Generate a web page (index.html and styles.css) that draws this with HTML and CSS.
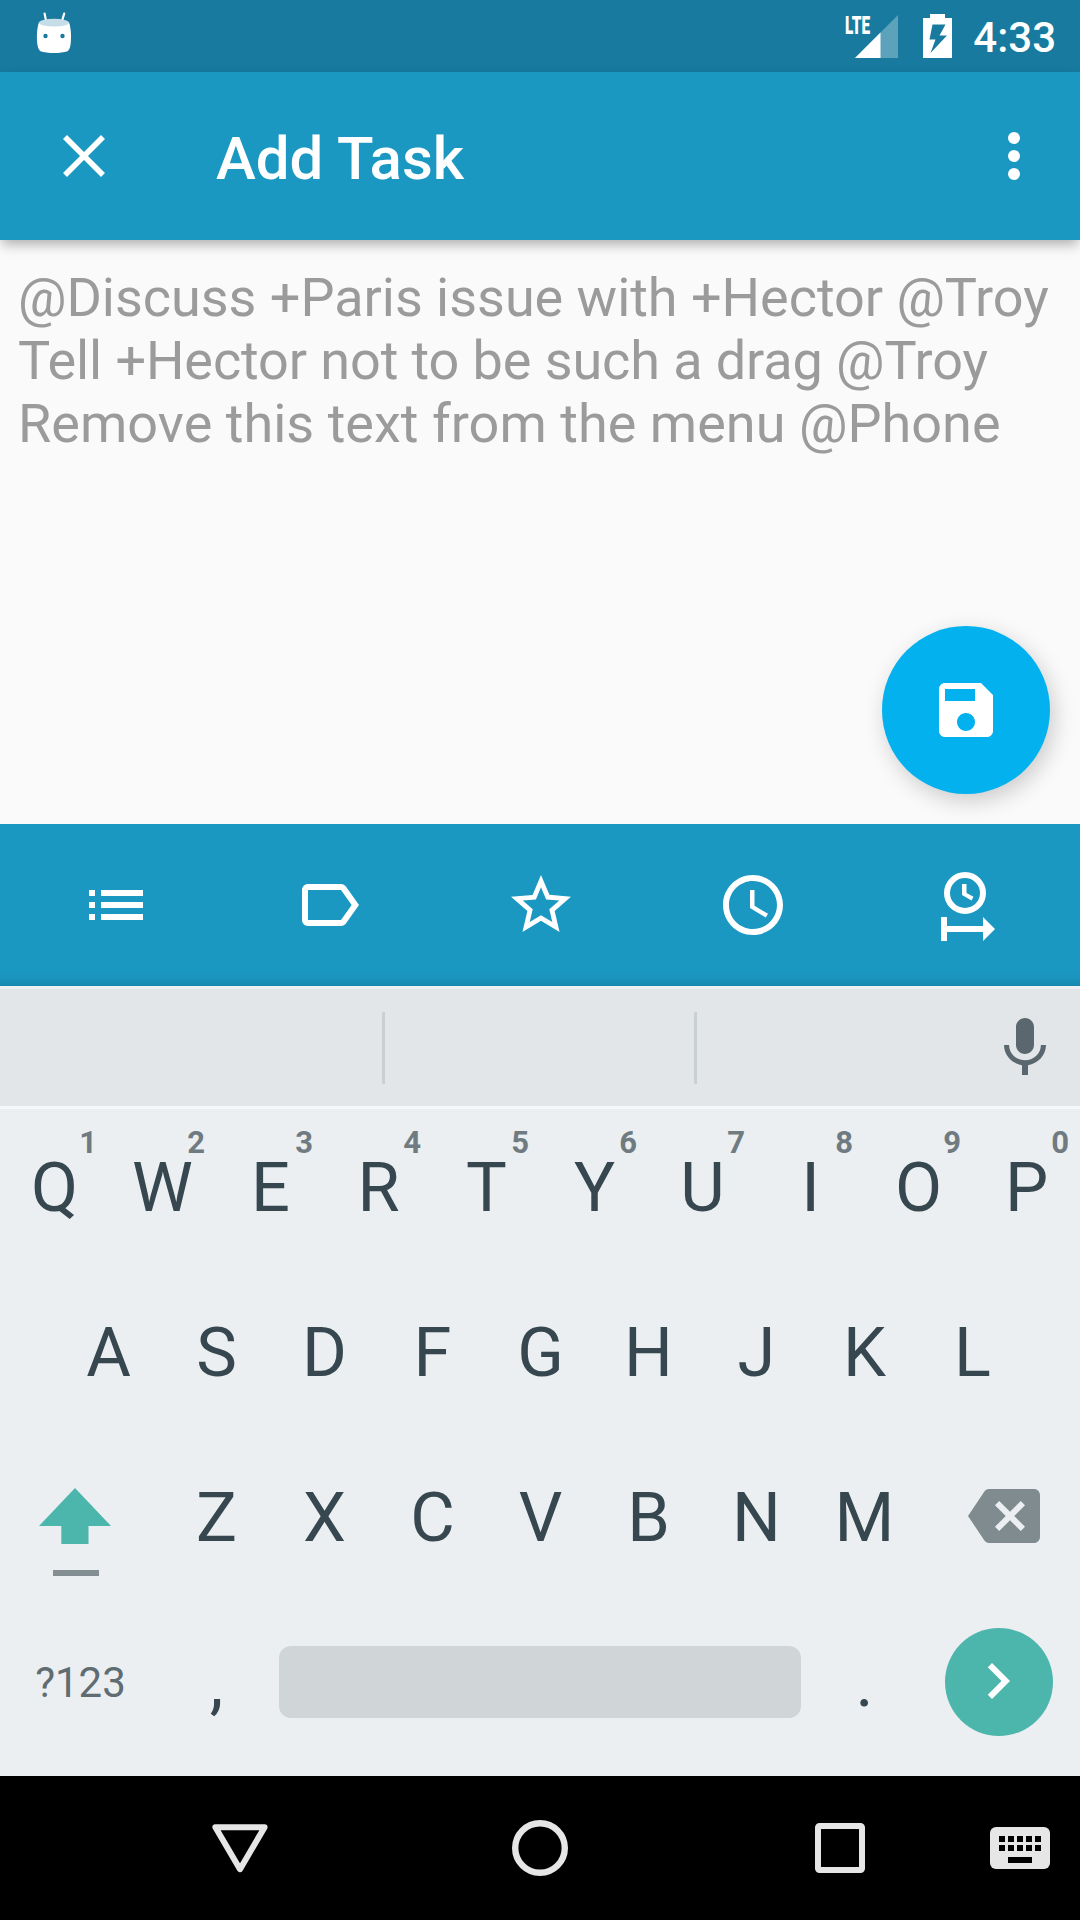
FILE: index.html
```html
<!DOCTYPE html>
<html lang="en">
<head>
<meta charset="utf-8">
<title>Add Task</title>
<link rel="stylesheet" href="styles.css">
</head>
<body>
<div class="screen">
  <header class="status-bar">
    <svg class="status-app" width="36" height="44" viewBox="36 11 36 44">
      <path d="M44.6 13.6L46.3 22M64.2 13.6L61.7 22" stroke="#fff" stroke-width="2.2" stroke-linecap="round"/>
      <path d="M39 22C37.3 27 36.9 32 36.9 37C36.900 43 37.600 49.500 40.500 51.200C47 53.600 61 53.600 67.500 51.200C70.400 49.500 71 43 71 37C71 32 70.600 27 69 22Z" fill="#fff"/>
      <ellipse cx="54" cy="22.700" rx="15" ry="3.900" fill="#c5dde6"/>
      <circle cx="45.500" cy="36" r="2.200" fill="#177a9e"/><circle cx="62.500" cy="36" r="2.200" fill="#177a9e"/>
    </svg>
    <div class="status-icons">
      <span class="lte">LTE</span>
      <svg class="signal" width="43" height="43" viewBox="0 0 43 43"><path d="M43 0V43H0Z" fill="#fff" fill-opacity=".3"/><path d="M25.500 17.500V43H0Z" fill="#fff"/></svg>
      <svg class="battery" width="29" height="44" viewBox="0 0 29 44"><path fill="#fff" fill-rule="evenodd" d="M7 0H22V4H29V44H0V4H7ZM9.500 10.500L6.500 25.500H12.500L7.500 39L24 21.500H16.500L22.500 10.500Z"/></svg>
      <span class="time">4:33</span>
    </div>
  </header>

  <div class="app-bar">
    <svg class="close" width="42" height="42" viewBox="0 0 42 42"><path d="M2 2L40 40M40 2L2 40" stroke="#fff" stroke-width="5.600"/></svg>
    <h1 class="title">Add Task</h1>
    <svg class="overflow" width="12" height="48" viewBox="0 0 12 48" fill="#fff"><circle cx="6" cy="6" r="6"/><circle cx="6" cy="24" r="6"/><circle cx="6" cy="42" r="6"/></svg>
  </div>

  <main class="editor">
    <p class="hint"><span class="line-first">@Discuss +Paris issue with +Hector @Troy</span><br><span class="line-second">Tell +Hector not to be such a drag @Troy</span><br><span class="line-third">Remove this text from the menu @Phone</span></p>
    <button class="fab" aria-label="Save">
      <svg width="72" height="72" viewBox="0 0 24 24" fill="#fff"><path d="M17 3H5c-1.110 0-2 .9-2 2v14c0 1.100.890 2 2 2h14c1.100 0 2-.9 2-2V7l-4-4zm-5 16c-1.660 0-3-1.340-3-3s1.340-3 3-3 3 1.340 3 3-1.340 3-3 3zm3-10H5V5h10v4z"/></svg>
    </button>
  </main>

  <nav class="tools">
    <svg width="72" height="72" viewBox="0 0 24 24"><path d="M3 13h2v-2H3v2zm0 4h2v-2H3v2zm0-8h2V7H3v2zm4 4h14v-2H7v2zm0 4h14v-2H7v2zM7 7v2h14V7H7z"/></svg>
    <svg width="72" height="72" viewBox="0 0 24 24"><path d="M17.630 5.840C17.270 5.330 16.670 5 16 5L5 5.010C3.900 5.010 3 5.900 3 7v10c0 1.100.9 1.990 2 1.990L16 19c.670 0 1.270-.330 1.630-.840L22 12l-4.370-6.160zM16 17H5V7h11l3.550 5L16 17z"/></svg>
    <svg width="72" height="72" viewBox="0 0 24 24"><path d="M22 9.240l-7.190-.620L12 2 9.190 8.630 2 9.240l5.460 4.730L5.820 21 12 17.270 18.180 21l-1.630-7.030L22 9.240zM12 15.400l-3.760 2.270 1-4.280-3.320-2.880 4.380-.380L12 6.100l1.710 4.040 4.380.380-3.320 2.880 1 4.280L12 15.400z"/></svg>
    <svg width="72" height="72" viewBox="0 0 24 24"><path d="M11.990 2C6.470 2 2 6.480 2 12s4.470 10 9.990 10C17.520 22 22 17.520 22 12S17.520 2 11.990 2zM12 20c-4.420 0-8-3.580-8-8s3.580-8 8-8 8 3.580 8 8-3.580 8-8 8zm.5-13H11v6l5.250 3.150.750-1.230-4.500-2.670z"/></svg>
    <svg width="72" height="72" viewBox="930 869 72 72"><circle cx="965" cy="893" r="18" fill="none" stroke="#fff" stroke-width="6"/><path d="M962 884h4.500v9l7 3.800-2 3.700-9.500-5.500ZM941 917h6v9h36v-9l12 12-12 12v-9h-36v9h-6Z"/></svg>
  </nav>

  <section class="keyboard">
    <div class="suggestions">
      <span class="slot"></span><span class="slot slot-mid"></span>
      <svg class="mic" width="72" height="72" viewBox="0 0 24 24" fill="#5b676e"><path d="M12 14c1.660 0 2.990-1.340 2.990-3L15 5c0-1.660-1.340-3-3-3S9 3.340 9 5v6c0 1.660 1.340 3 3 3zm5.300-3c0 3-2.540 5.100-5.300 5.100S6.700 14 6.700 11H5c0 3.410 2.720 6.230 6 6.720V21h2v-3.280c3.280-.480 6-3.300 6-6.720h-1.700z"/></svg>
    </div>
    <div class="row row-top">
      <span class="key">Q<small>1</small></span><span class="key">W<small>2</small></span><span class="key">E<small>3</small></span><span class="key">R<small>4</small></span><span class="key">T<small>5</small></span><span class="key">Y<small>6</small></span><span class="key">U<small>7</small></span><span class="key">I<small>8</small></span><span class="key">O<small>9</small></span><span class="key">P<small>0</small></span>
    </div>
    <div class="row row-home">
      <span class="key">A</span><span class="key">S</span><span class="key">D</span><span class="key">F</span><span class="key">G</span><span class="key">H</span><span class="key">J</span><span class="key">K</span><span class="key">L</span>
    </div>
    <div class="row">
      <span class="key key-wide shift"><svg width="72" height="88" viewBox="0 0 72 88"><path d="M36 0L72 38H49.500V56H22.300V38H0Z" fill="#4db6ac"/><path d="M14 82H60V88H14Z" fill="#838e93"/></svg></span>
      <span class="key">Z</span><span class="key">X</span><span class="key">C</span><span class="key">V</span><span class="key">B</span><span class="key">N</span><span class="key">M</span>
      <span class="key key-wide backspace"><svg width="72" height="72" viewBox="0 0 24 24" fill="#808b90"><path d="M22 3H7c-.690 0-1.230.350-1.590.880L0 12l5.410 8.110c.360.530.9.890 1.590.890h15c1.100 0 2-.9 2-2V5c0-1.100-.9-2-2-2zm-3 12.590L17.590 17 14 13.410 10.410 17 9 15.590 12.590 12 9 8.410 10.410 7 14 10.590 17.590 7 19 8.410 15.410 12 19 15.590z"/></svg></span>
    </div>
    <div class="row">
      <span class="key key-wide symbols">?123</span>
      <span class="key">,</span>
      <span class="key key-space"><i class="space"></i></span>
      <span class="key">.</span>
      <span class="key key-wide key-enter"><span class="enter"><svg width="72" height="72" viewBox="0 0 24 24" fill="#fff"><path d="M10 6L8.590 7.410 13.170 12l-4.580 4.590L10 18l6-6z"/></svg></span></span>
    </div>
  </section>

  <footer class="nav-bar">
    <svg class="nav-back" width="56" height="56" viewBox="0 0 56 56"><path d="M3.400 7.200H52.600L28 49.200Z" fill="none" stroke="#e6e6e6" stroke-width="6" stroke-linejoin="round"/></svg>
    <svg class="nav-home" width="56" height="56" viewBox="0 0 56 56"><circle cx="28" cy="28" r="24.800" fill="none" stroke="#e6e6e6" stroke-width="6.400"/></svg>
    <svg class="nav-recent" width="50" height="50" viewBox="0 0 50 50"><rect x="3" y="3" width="44" height="44" rx="1.500" fill="none" stroke="#e6e6e6" stroke-width="6"/></svg>
    <svg class="nav-ime" width="60" height="42" viewBox="0 0 60 42"><rect width="60" height="42" rx="6" fill="#e6e6e6"/><path d="M9 9h6v6h-6zM18 9h6v6h-6zM27 9h6v6h-6zM36 9h6v6h-6zM45 9h6v6h-6zM9 18h6v6h-6zM18 18h6v6h-6zM27 18h6v6h-6zM36 18h6v6h-6zM45 18h6v6h-6zM18 30h24v6h-24z" fill="#000"/></svg>
  </footer>
</div>
</body>
</html>
```
FILE: styles.css
```css
* { box-sizing: border-box; }

body {
  margin: 0;
  font-family: Roboto, sans-serif;
  color: #37474f;
}

svg { display: block; flex: none; }

.screen {
  width: 1080px;
  height: 1920px;
  display: flex;
  flex-direction: column;
  overflow: hidden;
  background: #fafafa;
}

/* Status bar */
.status-bar {
  height: 72px;
  flex: none;
  display: flex;
  align-items: flex-start;
  justify-content: space-between;
  padding: 11px 24px 0 36px;
  background: #177a9e;
  color: #fff;
}
.status-icons { display: flex; align-items: flex-start; }
.lte {
  width: 10px;
  margin-top: -2px;
  font-size: 26.500px;
  line-height: 32px;
  font-weight: 900;
  white-space: nowrap;
  transform: scaleX(.58);
  transform-origin: left top;
}
.signal { margin: 3.500px 25px 0 0; }
.battery { margin: 3px 21px 0 0; }
.time {
  font-size: 42px;
  line-height: 50px;
  font-weight: 500;
  margin-top: 2px;
}

/* App bar */
.app-bar {
  height: 168px;
  flex: none;
  display: flex;
  align-items: center;
  padding: 0 60px 0 63px;
  background: #1b98c2;
  color: #fff;
  box-shadow: 0 6px 12px -2px rgba(0, 0, 0, .32);
  z-index: 1;
}
.title {
  flex: 1;
  margin: 6px 0 0 111px;
  font-size: 60px;
  line-height: 70px;
  font-weight: 500;
}

/* Task editor */
.editor {
  height: 584px;
  flex: none;
  position: relative;
  padding: 26px 18px 0;
}
.hint {
  margin: 0;
  font-size: 54px;
  line-height: 63px;
  color: #9b9b9b;
  white-space: nowrap;
}
.line-first { letter-spacing: -.03px; }
.line-second { letter-spacing: -.1px; }
.line-third { letter-spacing: .03px; }
.fab {
  position: absolute;
  right: 30px;
  bottom: 30px;
  width: 168px;
  height: 168px;
  display: flex;
  align-items: center;
  justify-content: center;
  padding: 0;
  border: 0;
  border-radius: 50%;
  background: #03b1ef;
  box-shadow: 4px 7px 22px rgba(0, 0, 0, .19);
}

/* Formatting tools */
.tools {
  height: 162px;
  flex: none;
  display: grid;
  grid-template-columns: repeat(5, 1fr);
  place-items: center;
  padding: 0 8px 0 10px;
  background: linear-gradient(#1b98c2 146px, #1a94bd 154px, #1889ae 162px);
  z-index: 1;
}
.tools svg { fill: #fff; overflow: visible; }

/* Keyboard */
.keyboard {
  height: 790px;
  flex: none;
  background: #ebeff2;
}
.suggestions {
  height: 123px;
  display: flex;
  align-items: center;
  border-top: 3px solid #eef0f1;
  border-bottom: 3px solid #f5f7f9;
  background: #e2e6e9;
}
.slot {
  width: 385px;
  height: 72px;
  border-right: 3px solid #cacfd1;
}
.slot-mid { width: 312px; }
.mic { margin: 1px 0 0 292px; }

.row { display: flex; height: 165px; }
.row-home { padding: 0 54px; }
.key {
  position: relative;
  width: 108px;
  display: flex;
  align-items: center;
  justify-content: center;
  padding: 0 0 7px 1px;
  font-size: 68.500px;
  line-height: 80px;
}
.key small {
  position: absolute;
  top: 16px;
  right: 11px;
  font-size: 31px;
  line-height: 36px;
  font-weight: 700;
  color: #6f7b81;
}
.key-wide { width: 162px; }
.key-space { width: 540px; padding: 0 0 9px; }
.key-enter { padding: 0 0 9px; }
.shift { align-items: flex-start; padding: 49px 12px 0 0; }
.backspace { padding: 0 0 11px 10px; }
.symbols { font-size: 42px; color: #5f6c72; padding: 0 1px 8px 0; }
.space {
  width: 522px;
  height: 72px;
  border-radius: 12px;
  background: #d0d5d8;
}
.enter {
  width: 108px;
  height: 108px;
  display: flex;
  align-items: center;
  justify-content: center;
  padding: 0 2px 2px 0;
  border-radius: 50%;
  background: #4db6ac;
}

/* System navigation */
.nav-bar {
  height: 144px;
  flex: none;
  display: grid;
  grid-template-columns: 300px 300px 300px 90px;
  place-items: center;
  padding-left: 90px;
  background: #000;
}
.nav-ime { justify-self: start; }
```
